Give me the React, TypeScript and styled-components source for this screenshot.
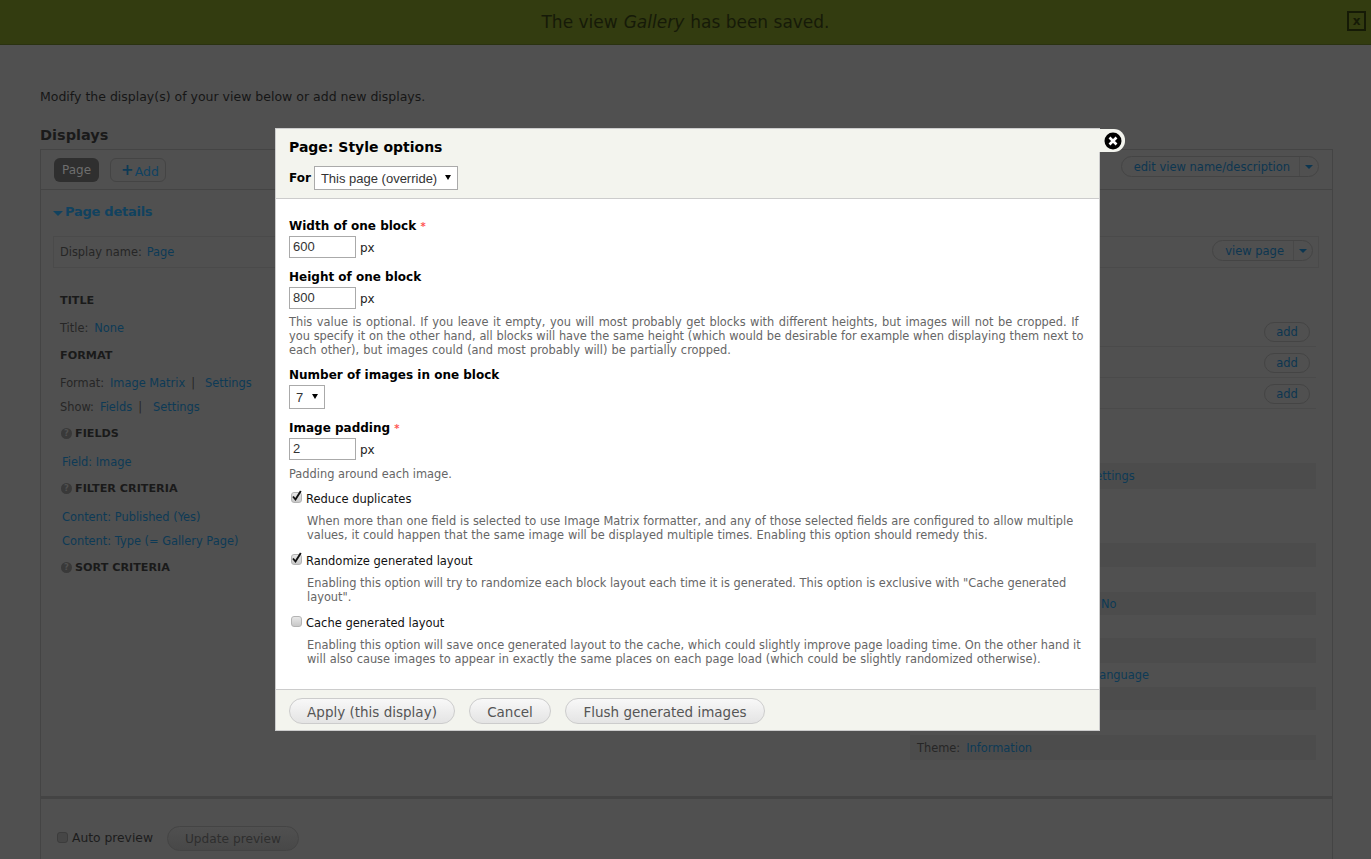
import React from 'react';
import styled, { createGlobalStyle } from 'styled-components';

const GlobalStyle = createGlobalStyle`
  html, body {
    margin: 0;
    height: 859px;
    overflow: hidden;
    background: #505050;
    font-family: "DejaVu Sans", sans-serif;
    font-size: 12px;
    color: #1c1c1c;
  }
`;

const Page = styled.div`
  height: 859px;
  overflow: hidden;
  position: relative;
`;

const Message = styled.div`
  height: 44px;
  background: #333c10;
  border-bottom: 1px solid #2a3210;
  display: flex;
  align-items: center;
  justify-content: center;
  position: relative;
  font-size: 17px;
  color: #161a08;
  em { margin: 0 6px; }
`;

const MessageClose = styled.div`
  position: absolute;
  right: 5px;
  top: 11px;
  width: 15px;
  height: 16px;
  border: 2px solid #151a06;
  display: flex;
  align-items: center;
  justify-content: center;
  font-size: 12px;
  font-weight: bold;
  color: #151a06;
`;

const Content = styled.div`
  padding: 44px 38px 0 40px;
`;

const Intro = styled.p`
  margin: 0;
  height: 15px;
  line-height: 15px;
  font-size: 12.5px;
  color: #161616;
`;

const Heading = styled.h2`
  margin: 23px 0 0;
  height: 16px;
  line-height: 16px;
  font-size: 14.5px;
  font-weight: bold;
  color: #1a1a1a;
`;

const Box = styled.div`
  margin-top: 6px;
  height: 720px;
  border: 1px solid #444;
  display: flex;
  flex-direction: column;
`;

const TabBar = styled.div`
  height: 39px;
  flex: none;
  border-bottom: 1px solid #444;
  display: flex;
  align-items: center;
  padding: 0 13px;
  gap: 11px;
`;

const ActiveTab = styled.span`
  background: #2f2f2f;
  color: #6e6e6e;
  height: 24px;
  line-height: 24px;
  padding: 0 8px;
  border-radius: 6px;
  font-size: 12px;
`;

const AddTab = styled.span`
  height: 22px;
  line-height: 22px;
  padding: 0 6px 0 10px;
  border: 1px solid #444;
  border-radius: 6px;
  color: #0f4262;
  font-size: 12.5px;
  b { font-size: 15px; color: #0d3a55; margin-right: 1px; vertical-align: 1px; }
`;

const PillGroup = styled.span<{ $lift?: number }>`
  margin-left: auto;
  margin-bottom: ${p => p.$lift ?? 0}px;
  display: inline-flex;
  align-items: center;
  height: 19px;
  border: 1px solid #444;
  border-radius: 11px;
  font-size: 11.5px;
  color: #0d3650;
  padding-left: 12px;
`;

const PillCaret = styled.span`
  margin-left: 9px;
  width: 18px;
  height: 19px;
  border-left: 1px solid #484848;
  display: flex;
  align-items: center;
  justify-content: center;
  &::after {
    content: '';
    border: 4px solid transparent;
    border-top-color: #0d3650;
    border-bottom-width: 0;
    margin-left: -1px;
  }
`;

const Details = styled.div`
  flex: 1;
  padding: 13px 13px 0 12px;
`;

const DetailsTitle = styled.div`
  height: 18px;
  line-height: 18px;
  font-size: 13px;
  letter-spacing: -0.25px;
  font-weight: bold;
  color: #11425f;
  display: flex;
  align-items: center;
  &::before {
    content: '';
    border: 5px solid transparent;
    border-top-color: #11425f;
    border-bottom-width: 0;
    margin-right: 2px;
    margin-top: 2px;
  }
`;

const NameBar = styled.div`
  margin-top: 15px;
  height: 30px;
  border: 1px solid #4a4a4a;
  display: flex;
  align-items: center;
  padding: 0 5px 0 6px;
  gap: 5px;
  font-size: 11.4px;
  color: #262626;
`;

const Columns = styled.div`
  margin-top: 17px;
  display: flex;
  justify-content: space-between;
  align-items: flex-start;
  padding-right: 3px;
`;

const Column = styled.div<{ $width: number }>`
  width: ${p => p.$width}px;
`;

const SectionHead = styled.div<{ $h: number }>`
  height: ${p => p.$h}px;
  display: flex;
  align-items: center;
  padding-left: 7px;
  font-size: 11.2px;
  font-weight: bold;
  color: #1a1a1a;
  gap: 3px;
`;

const Help = styled.span`
  width: 11px;
  height: 11px;
  margin-left: 1px;
  border-radius: 50%;
  background: #393939;
  color: #505050;
  font-size: 8.5px;
  font-weight: bold;
  line-height: 11px;
  text-align: center;
`;

const Row = styled.div<{ $h: number; $shade?: boolean }>`
  height: ${p => p.$h}px;
  display: flex;
  align-items: center;
  padding: 0 8px 0 7px;
  gap: 6px;
  font-size: 11.4px;
  color: #262626;
  background: ${p => (p.$shade ? '#4c4c4c' : 'transparent')};
  white-space: nowrap;
`;

const Link = styled.span<{ $indent?: number }>`
  color: #0d3a56;
  margin-left: ${p => p.$indent ?? 0}px;
`;

const AddRow = styled.div`
  height: 30px;
  display: flex;
  align-items: center;
  justify-content: flex-end;
  padding-right: 6px;
  border-bottom: 1px solid #4a4a4a;
`;

const AddButton = styled.span`
  width: 44px;
  height: 18px;
  line-height: 18px;
  margin-top: 2px;
  border: 1px solid #444;
  border-radius: 10px;
  text-align: center;
  font-size: 11.5px;
  color: #0d3650;
`;

const PreviewBar = styled.div`
  flex: none;
  border-top: 3px solid #444;
  height: 74px;
  box-sizing: border-box;
  padding: 27px 0 0 16px;
  display: flex;
  align-items: flex-start;
`;

const PreviewBox = styled.span`
  width: 9px;
  height: 9px;
  margin-top: 6px;
  border: 1px solid #3c3c3c;
  border-radius: 3px;
  background: #464646;
`;

const PreviewLabel = styled.span`
  margin: 5px 14px 0 4px;
  font-size: 12.3px;
  color: #1c1c1c;
`;

const PreviewButton = styled.span`
  width: 130px;
  height: 23px;
  line-height: 25px;
  border: 1px solid #444;
  border-radius: 13px;
  background: linear-gradient(#505050, #484848);
  text-align: center;
  font-size: 12.2px;
  color: #2e2e2e;
`;

const Modal = styled.div`
  position: absolute;
  left: 275px;
  top: 128px;
  width: 823px;
  border: 1px solid #ccc;
  background: #fff;
`;

const ModalHead = styled.div`
  background: #f3f4ee;
  height: 69px;
  border-bottom: 1px solid #ccc;
  padding: 0 13px;
`;

const ModalTitle = styled.h1`
  margin: 0;
  padding-top: 9px;
  height: 18px;
  line-height: 18px;
  font-size: 14px;
  font-weight: bold;
  color: #000;
`;

const ForRow = styled.div`
  margin-top: 10px;
  display: flex;
  align-items: center;
  gap: 3px;
  font-weight: bold;
  color: #000;
`;

const Select = styled.span<{ $w: number }>`
  width: ${p => p.$w}px;
  height: 24px;
  border: 1px solid #aaa;
  background: #fff;
  box-sizing: border-box;
  font-family: "Liberation Sans", sans-serif;
  font-weight: normal;
  font-size: 13px;
  color: #333;
  display: flex;
  align-items: center;
  justify-content: space-between;
  padding: 0 6px;
  &::after {
    content: '';
    border: 3.5px solid transparent;
    border-top: 5px solid #000;
    border-bottom-width: 0;
    margin-left: 4px;
    margin-top: -2px;
  }
`;

const CloseTab = styled.div`
  position: absolute;
  left: 823px;
  top: 0;
  width: 26px;
  height: 23px;
  background: #f3f4ee;
  border-radius: 0 11px 11px 0;
  display: flex;
  align-items: center;
  padding-left: 5px;
  box-sizing: border-box;
`;

const ModalBody = styled.div`
  height: 490px;
  padding: 19px 13px 0;
  box-sizing: border-box;
`;

const FieldLabel = styled.div<{ $top?: number }>`
  margin-top: ${p => p.$top ?? 0}px;
  height: 14px;
  line-height: 16px;
  font-weight: bold;
  color: #000;
  i { font-style: normal; font-size: 10px; color: #f55; }
`;

const InputRow = styled.div`
  margin-top: 4px;
  display: flex;
  align-items: center;
  gap: 4px;
  color: #222;
`;

const Unit = styled.span`
  margin-top: 2px;
`;

const TextBox = styled.span`
  width: 67px;
  height: 22px;
  border: 1px solid #aaa;
  box-sizing: border-box;
  padding-left: 3px;
  line-height: 20px;
  font-family: "Liberation Sans", sans-serif;
  font-size: 13px;
  color: #333;
`;

const Description = styled.div<{ $indent?: number; $top?: number }>`
  margin: ${p => p.$top ?? 6}px 0 0 ${p => p.$indent ?? 0}px;
  font-size: 11.4px;
  line-height: 14px;
  color: #666;
  white-space: nowrap;
`;

const Line = styled.div<{ $spread?: number }>`
  word-spacing: ${p => p.$spread ?? 0}px;
`;

const CheckRow = styled.div<{ $top?: number }>`
  margin-top: ${p => p.$top ?? 10}px;
  height: 16px;
  display: flex;
  align-items: center;
  gap: 4px;
  font-size: 11.5px;
  color: #111;
`;

const CheckLabel = styled.span`
  margin-top: 2px;
`;

const CheckBox = styled.span`
  position: relative;
  width: 9px;
  height: 9px;
  margin-top: -2px;
  margin-left: 2px;
  border: 1px solid #b4b4b4;
  border-radius: 3px;
  background: linear-gradient(#e8e8e8, #c8c8c8);
  svg { position: absolute; left: -1px; top: -4px; }
`;

const ModalFoot = styled.div`
  height: 40px;
  border-top: 1px solid #ccc;
  background: #f3f4ee;
  display: flex;
  align-items: center;
  padding: 0 13px;
  gap: 14px;
`;

const FootButton = styled.span<{ $w: number }>`
  width: ${p => p.$w}px;
  height: 24px;
  line-height: 26px;
  border: 1px solid #ccc;
  border-radius: 13px;
  background: linear-gradient(#f8f8f8, #e4e4e4);
  text-align: center;
  font-size: 13.5px;
  color: #555;
  margin-top: 2px;
`;

const Check = ({ on }: { on?: boolean }) => (
  <CheckBox>
    {on && (
      <svg width="12" height="13" viewBox="0 0 12 13">
        <path d="M2 7.5 L4.5 10.5 L9.8 2" fill="none" stroke="#111" strokeWidth="1.9" />
      </svg>
    )}
  </CheckBox>
);

export default function App() {
  return (
    <Page>
      <GlobalStyle />
      <Message>
        The view <em>Gallery</em> has been saved.
        <MessageClose>x</MessageClose>
      </Message>
      <Content>
        <Intro>Modify the display(s) of your view below or add new displays.</Intro>
        <Heading>Displays</Heading>
        <Box>
          <TabBar>
            <ActiveTab>Page</ActiveTab>
            <AddTab><b>+</b>Add</AddTab>
            <PillGroup $lift={6}>edit view name/description<PillCaret /></PillGroup>
          </TabBar>
          <Details>
            <DetailsTitle>Page details</DetailsTitle>
            <NameBar>
              Display name: <Link>Page</Link>
              <PillGroup $lift={3}>view page<PillCaret /></PillGroup>
            </NameBar>
            <Columns>
              <Column $width={400}>
                <SectionHead $h={31}>TITLE</SectionHead>
                <Row $h={23}>Title: <Link>None</Link></Row>
                <SectionHead $h={32}>FORMAT</SectionHead>
                <Row $h={24}>Format: <Link>Image Matrix</Link> | <Link $indent={4}>Settings</Link></Row>
                <Row $h={23}>Show: <Link>Fields</Link> | <Link $indent={5}>Settings</Link></Row>
                <SectionHead $h={30}><Help>?</Help>FIELDS</SectionHead>
                <Row $h={28}><Link $indent={2}>Field: Image</Link></Row>
                <SectionHead $h={25}><Help>?</Help>FILTER CRITERIA</SectionHead>
                <Row $h={32}><Link $indent={2}>Content: Published (Yes)</Link></Row>
                <Row $h={16}><Link $indent={2}>Content: Type (= Gallery Page)</Link></Row>
                <SectionHead $h={36}><Help>?</Help>SORT CRITERIA</SectionHead>
              </Column>
              <Column $width={406}>
                <Row $h={31} />
                <AddRow><AddButton>add</AddButton></AddRow>
                <AddRow><AddButton>add</AddButton></AddRow>
                <AddRow><AddButton>add</AddButton></AddRow>
                <Row $h={54} />
                <Row $h={26} $shade><Link $indent={171}>Settings</Link></Row>
                <Row $h={54} />
                <Row $h={24} $shade />
                <Row $h={25} />
                <Row $h={23} $shade><Link $indent={184}>No</Link></Row>
                <Row $h={23} />
                <Row $h={25} $shade />
                <Row $h={24}><Link $indent={179}>language</Link></Row>
                <Row $h={23} $shade />
                <Row $h={25} />
                <Row $h={25} $shade>Theme: <Link>Information</Link></Row>
              </Column>
            </Columns>
          </Details>
          <PreviewBar>
            <PreviewBox />
            <PreviewLabel>Auto preview</PreviewLabel>
            <PreviewButton>Update preview</PreviewButton>
          </PreviewBar>
        </Box>
      </Content>
      <Modal>
        <ModalHead>
          <ModalTitle>Page: Style options</ModalTitle>
          <ForRow>For <Select $w={144}>This page (override)</Select></ForRow>
        </ModalHead>
        <CloseTab>
          <svg width="18" height="18" viewBox="0 0 18 18">
            <circle cx="9" cy="9" r="8.5" fill="#000" />
            <path d="M5.5 5.5 L12.5 12.5 M12.5 5.5 L5.5 12.5" stroke="#fff" strokeWidth="2.6" />
          </svg>
        </CloseTab>
        <ModalBody>
          <FieldLabel>Width of one block <i>*</i></FieldLabel>
          <InputRow><TextBox>600</TextBox><Unit>px</Unit></InputRow>
          <FieldLabel $top={11}>Height of one block</FieldLabel>
          <InputRow><TextBox>800</TextBox><Unit>px</Unit></InputRow>
          <Description>
            <Line $spread={0.9}>This value is optional. If you leave it empty, you will most probably get blocks with different heights, but images will not be cropped. If</Line>
            <Line $spread={0.12}>you specify it on the other hand, all blocks will have the same height (which would be desirable for example when displaying them next to</Line>
            <Line $spread={0.6}>each other), but images could (and most probably will) be partially cropped.</Line>
          </Description>
          <FieldLabel $top={10}>Number of images in one block</FieldLabel>
          <InputRow><Select $w={36}>7</Select></InputRow>
          <FieldLabel $top={11}>Image padding <i>*</i></FieldLabel>
          <InputRow><TextBox>2</TextBox><Unit>px</Unit></InputRow>
          <Description $top={7}>Padding around each image.</Description>
          <CheckRow $top={9}><Check on /><CheckLabel>Reduce duplicates</CheckLabel></CheckRow>
          <Description $indent={18} $top={8}>
            <Line $spread={0.2}>When more than one field is selected to use Image Matrix formatter, and any of those selected fields are configured to allow multiple</Line>
            <Line $spread={0.2}>values, it could happen that the same image will be displayed multiple times. Enabling this option should remedy this.</Line>
          </Description>
          <CheckRow><Check on /><CheckLabel>Randomize generated layout</CheckLabel></CheckRow>
          <Description $indent={18} $top={8}>
            <Line>Enabling this option will try to randomize each block layout each time it is generated. This option is exclusive with "Cache generated</Line>
            <Line>layout".</Line>
          </Description>
          <CheckRow><Check /><CheckLabel>Cache generated layout</CheckLabel></CheckRow>
          <Description $indent={18} $top={8}>
            <Line>Enabling this option will save once generated layout to the cache, which could slightly improve page loading time. On the other hand it</Line>
            <Line $spread={0.27}>will also cause images to appear in exactly the same places on each page load (which could be slightly randomized otherwise).</Line>
          </Description>
        </ModalBody>
        <ModalFoot>
          <FootButton $w={164}>Apply (this display)</FootButton>
          <FootButton $w={80}>Cancel</FootButton>
          <FootButton $w={198}>Flush generated images</FootButton>
        </ModalFoot>
      </Modal>
    </Page>
  );
}
